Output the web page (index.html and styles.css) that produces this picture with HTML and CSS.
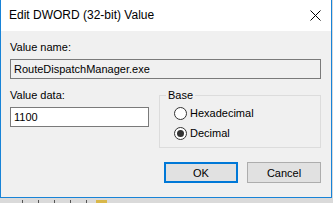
FILE: index.html
```html
<!DOCTYPE html>
<html lang="en">
<head>
  <meta charset="UTF-8" />
  <title>Edit DWORD (32-bit) Value</title>
  <link rel="stylesheet" href="styles.css">
</head>
<body>
  <div class="dialog">
    <div class="titlebar">
      <span class="title">Edit DWORD (32-bit) Value</span>
      <svg class="close" width="11" height="11" viewBox="0 0 11 11">
        <path d="M0.5 0.5 L10.5 10.5 M10.5 0.5 L0.5 10.5" stroke="#000" stroke-width="1" fill="none" />
      </svg>
    </div>

    <div class="content">
      <label class="label">Value name:</label>
      <input type="text" class="field readonly" value="RouteDispatchManager.exe" readonly />

      <div class="row">
        <div class="data-col">
          <label class="label">Value data:</label>
          <input type="text" class="field" value="1100" />
        </div>
        <fieldset class="base">
          <legend>Base</legend>
          <label class="radio"><input type="radio" name="base" /> Hexadecimal</label>
          <label class="radio"><input type="radio" name="base" checked /> Decimal</label>
        </fieldset>
      </div>

      <div class="buttons">
        <button class="btn default">OK</button>
        <button class="btn">Cancel</button>
      </div>
    </div>
  </div>

  <div class="taskstrip">
    <span class="tick"></span>
    <span class="tick"></span>
    <span class="tick"></span>
    <span class="tick"></span>
    <span class="tick"></span>
    <span class="folder"></span>
  </div>
</body>
</html>
```

FILE: styles.css
```css
* {
  margin: 0; padding: 0; box-sizing: border-box;
}
body {
  background-color: #dadada;
  font-family: "Liberation Sans", Arial, sans-serif;
  font-size: 11px;
  color: #000;
  width: 333px;
  height: 203px;
  overflow: hidden;
}

.dialog {
  width: 332px;
  height: 198px;
  border: 1px solid #1883d7;
  border-top: none;
  background-color: #f0f0f0;
  display: flex;
  flex-direction: column;
}

.titlebar {
  height: 31px;
  background-color: #fff;
  display: flex;
  align-items: center;
  justify-content: space-between;
  padding: 0 10px 0 8px;
}
.title {
  font-size: 12px;
  line-height: 15px;
}
.close {
  display: block;
}

.content {
  padding: 9px 10px 0 9px;
  display: flex;
  flex-direction: column;
}

.label {
  display: block;
  line-height: 15px;
  margin-bottom: 4px;
}

.field {
  display: block;
  width: 100%;
  height: 20px;
  border: 1px solid #7a7a7a;
  background-color: #fff;
  font-family: inherit;
  font-size: 11px;
  padding: 0 3px;
  color: #000;
  outline: none;
}
.field.readonly {
  background-color: #f0f0f0;
}

.row {
  display: flex;
  gap: 10px;
  margin-top: 9px;
}
.data-col {
  width: 139px;
}

.base {
  width: 162px;
  border: 1px solid #dcdcdc;
  padding: 0 0 4px 14px;
}
.base legend {
  line-height: 15px;
  padding: 0 2px;
  margin-left: -8px;
}

.radio {
  display: flex;
  align-items: center;
  height: 20px;
  gap: 3px;
}
.radio input {
  appearance: none;
  -webkit-appearance: none;
  width: 13px;
  height: 13px;
  border: 1px solid #333;
  border-radius: 50%;
  background-color: #fff;
  display: flex;
  align-items: center;
  justify-content: center;
  margin: 0;
}
.radio input:checked::after {
  content: "";
  width: 7px;
  height: 7px;
  border-radius: 50%;
  background-color: #333;
}

.buttons {
  display: flex;
  justify-content: flex-end;
  gap: 9px;
  margin-top: 14px;
}
.btn {
  width: 74px;
  height: 21px;
  background-color: #e1e1e1;
  border: 1px solid #adadad;
  font-family: inherit;
  font-size: 11px;
  color: #000;
}
.btn.default {
  border: 2px solid #0078d7;
}

.taskstrip {
  height: 5px;
  display: flex;
  align-items: flex-end;
  padding-left: 22px;
  gap: 15px;
}
.tick {
  width: 1px;
  height: 3px;
  background-color: #555;
}
.folder {
  width: 11px;
  height: 3px;
  background-color: #d9b84a;
  margin-left: -6px;
}
```
